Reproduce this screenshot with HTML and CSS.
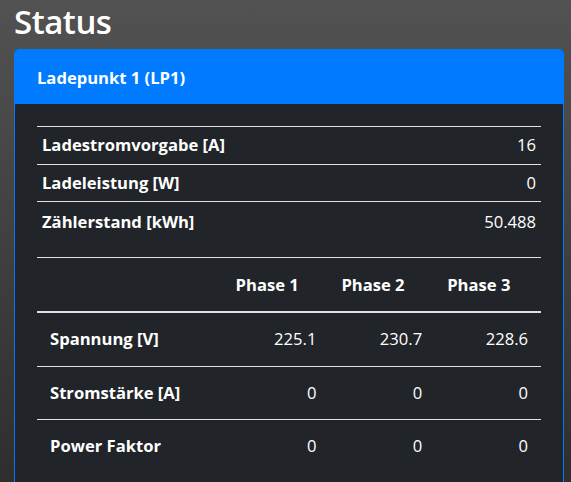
FILE: index.html
```html
<!DOCTYPE html>
<html lang="de">
<head>
<meta charset="utf-8">
<title>Status</title>
<link rel="stylesheet" href="styles.css">
</head>
<body>
<main class="page">
  <h1 class="title">Status</h1>
  <section class="card">
    <header class="card-header">Ladepunkt 1 (LP1)</header>
    <div class="card-body">
      <table class="tbl tbl-sm">
        <tbody>
          <tr><th>Ladestromvorgabe [A]</th><td>16</td></tr>
          <tr><th>Ladeleistung [W]</th><td>0</td></tr>
          <tr class="last"><th>Zählerstand [kWh]</th><td>50.488</td></tr>
        </tbody>
      </table>
      <table class="tbl tbl-phase">
        <thead>
          <tr><th class="lbl"></th><th class="ph">Phase 1</th><th class="ph">Phase 2</th><th class="ph">Phase 3</th></tr>
        </thead>
        <tbody>
          <tr><th class="lbl">Spannung [V]</th><td>225.1</td><td>230.7</td><td>228.6</td></tr>
          <tr><th class="lbl">Stromstärke [A]</th><td>0</td><td>0</td><td>0</td></tr>
          <tr><th class="lbl">Power Faktor</th><td>0</td><td>0</td><td>0</td></tr>
        </tbody>
      </table>
    </div>
  </section>
</main>
</body>
</html>
```
FILE: styles.css
```css
html, body {
  margin: 0;
  padding: 0;
  height: 100%;
}
body {
  background: linear-gradient(to bottom, #525252 0%, #2e2e2e 100%);
  color: #ffffff;
  font-family: "Open Sans", "Noto Sans", sans-serif;
  font-size: 16px;
  overflow: hidden;
}
.page {
  padding: 0 7px 0 14px;
}
.title {
  margin: 0;
  height: 49px;
  font-size: 33px;
  font-weight: 600;
  line-height: 44px;
  letter-spacing: -0.5px;
}
.card {
  border: 1px solid #007bff;
  border-radius: 4px;
  background: #212529;
  min-height: 440px;
}
.card-header {
  background: #007bff;
  height: 54px;
  padding: 0 22px;
  display: flex;
  align-items: center;
  font-size: 16.6px;
  font-weight: 700;
  border-radius: 3px 3px 0 0;
}
.card-body {
  padding: 22px 22px 0 22px;
}
.tbl {
  width: 100%;
  border-collapse: collapse;
  font-size: 16.6px;
}
.tbl th { font-weight: 700; text-align: left; }
.tbl td { text-align: right; font-weight: 400; }
.tbl-sm {
  margin-bottom: 16.5px;
}
.tbl-sm th, .tbl-sm td {
  border-top: 1px solid #dee2e6;
  padding: 6.25px 5px;
  line-height: 24px;
}
.tbl-sm .last th, .tbl-sm .last td {
  padding-top: 8.25px;
}
.tbl-phase th, .tbl-phase td {
  border-top: 1px solid #dee2e6;
  padding: 14.25px 13px;
  line-height: 24px;
}
.tbl-phase thead th {
  padding-top: 14.5px;
  padding-bottom: 14.5px;
  border-bottom: 2px solid #dee2e6;
}
.tbl-phase .lbl { width: 161px; }
.tbl-phase .ph { text-align: left; padding-left: 12px; width: 81px; }
.tbl-phase td { padding-right: 13px; }
```
